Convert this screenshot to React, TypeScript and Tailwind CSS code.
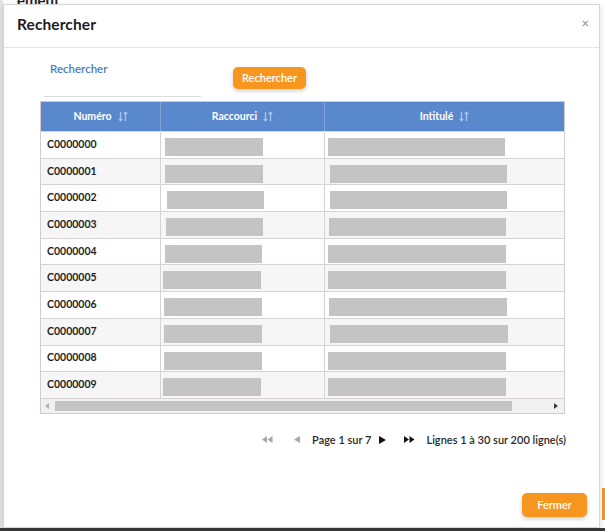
import React from "react";

const racc = [
  [5, 98], [5, 98], [7, 97], [6, 97], [5, 97], [3, 98], [4, 98], [4, 98], [4, 98], [3, 98],
];
const intit = [
  [4, 177], [6, 177], [6, 177], [5, 177], [4, 178], [4, 178], [5, 178], [6, 178], [4, 178], [4, 178],
];

function SortIcon() {
  return (
    <svg width="10" height="11" viewBox="0 0 10 11" className="ml-[6px] inline-block">
      <path d="M2.5 1 V9.5 M0.8 7.8 L2.5 9.8 L4.2 7.8" stroke="#a9c6ee" strokeWidth="1.3" fill="none" />
      <path d="M7.5 10 V1.5 M5.8 3.2 L7.5 1.2 L9.2 3.2" stroke="#a9c6ee" strokeWidth="1.3" fill="none" />
    </svg>
  );
}

export default function App() {
  const font = { fontFamily: "Lato, 'Open Sans', sans-serif" };
  return (
    <div className="relative w-[605px] h-[531px] overflow-hidden bg-white" style={font}>
      <div className="absolute left-[17px] top-[-11px] text-[15px] font-bold text-[#222]">ement</div>
      <div className="absolute left-0 top-0 w-[3px] h-full bg-[#e4e4e4]" />
      <div className="absolute right-0 top-[488px] w-[3px] h-[32px] bg-[#f7961e]" />
      <div className="absolute left-0 bottom-0 w-full h-[3px] bg-[#3a3a3a]" />
      <div className="absolute left-[3px] top-[4px] w-[597px] h-[524px] bg-white border border-[#d6d6d6] shadow-[0_2px_6px_rgba(0,0,0,0.15)] flex flex-col">
        <div className="h-[43px] border-b border-[#e3e3e3] flex items-center justify-between pl-[13px] pr-[10px] pb-[3px] shrink-0">
          <span className="text-[15.5px] font-bold text-[#1d1d1d] tracking-[0.1px]">Rechercher</span>
          <span className="text-[13px] text-[#8a8a8a] leading-none mb-[2px]">×</span>
        </div>
        <div className="pl-[37px] pt-[15px] flex">
          <div className="w-[157px] ml-[3px] border-b border-[#dcdcdc] h-[34px]">
            <div className="pl-[6px] text-[11.5px] font-semibold text-[#5079b5] leading-[12px]">Rechercher</div>
          </div>
          <div className="ml-[32px] mt-[4px] h-[22px] w-[73px] rounded-[5px] bg-[#f7961e] text-white text-[11px] font-semibold flex items-center justify-center shadow-[0_2px_4px_rgba(0,0,0,0.2)]">
            Rechercher
          </div>
        </div>
        <div className="ml-[36px] mt-[4px] w-[525px] border border-[#d2cccc]">
          <div className="flex h-[29px] bg-[#5a88cc] text-white text-[10.5px] font-bold">
            <div className="w-[120px] flex items-center justify-center border-r border-[#7fa1d6]">Numéro<SortIcon /></div>
            <div className="w-[164px] flex items-center justify-center border-r border-[#7fa1d6]">Raccourci<SortIcon /></div>
            <div className="flex-1 flex items-center justify-center">Intitulé<SortIcon /></div>
          </div>
          {racc.map((r, i) => (
            <div
              key={i}
              className={`flex h-[26.7px] border-t border-[#d8d2d2] ${i % 2 === 1 ? "bg-[#f6f6f6]" : "bg-white"}`}
            >
              <div className="w-[120px] border-r border-[#d8d2d2] flex items-center pl-[6px] text-[10.5px] font-bold text-[#1f1f1f]">
                C000000{i}
              </div>
              <div className="w-[164px] border-r border-[#d8d2d2] relative">
                <div className="absolute top-[6px] h-[18px] bg-[#c4c4c4]" style={{ left: r[0] - 1, width: r[1] }} />
              </div>
              <div className="flex-1 relative">
                <div className="absolute top-[6px] h-[18px] bg-[#c4c4c4]" style={{ left: intit[i][0] - 1, width: intit[i][1] }} />
              </div>
            </div>
          ))}
          <div className="h-[15px] border-t border-[#d8d2d2] bg-[#f1f1f1] flex items-center relative">
            <svg width="5" height="6" viewBox="0 0 5 6" className="absolute left-[4px] top-[4px]">
              <path d="M4 0 L0 3 L4 6 Z" fill="#b0b0b0" />
            </svg>
            <div className="absolute left-[14px] top-[2px] h-[10px] w-[457px] bg-[#c4c4c4]" />
            <svg width="5" height="6" viewBox="0 0 5 6" className="absolute right-[5px] top-[4px]">
              <path d="M0 0 L4 3 L0 6 Z" fill="#404040" />
            </svg>
          </div>
        </div>
        <div className="flex items-center justify-end mr-[33px] mt-[19px] text-[11px] font-semibold text-[#2a2a2a] h-[14px]">
          <svg width="11" height="7" viewBox="0 0 11 7" className="mr-[21px]">
            <path d="M5 0 L0 3.5 L5 7 Z M10.5 0 L5.5 3.5 L10.5 7 Z" fill="#a8a8a8" />
          </svg>
          <svg width="6" height="7" viewBox="0 0 6 7" className="mr-[12px]">
            <path d="M6 0 L0 3.5 L6 7 Z" fill="#a8a8a8" />
          </svg>
          <span>Page 1 sur 7</span>
          <svg width="7" height="8" viewBox="0 0 7 8" className="ml-[8px] mr-[18px]">
            <path d="M0 0 L7 4 L0 8 Z" fill="#111" />
          </svg>
          <svg width="11" height="7" viewBox="0 0 11 7" className="mr-[11px]">
            <path d="M0 0 L5 3.5 L0 7 Z M5.5 0 L10.5 3.5 L5.5 7 Z" fill="#111" />
          </svg>
          <span>Lignes 1 à 30 sur 200 ligne(s)</span>
        </div>
        <div className="flex-1" />
        <div className="flex justify-end pr-[12px] pb-[10px]">
          <div className="h-[24px] w-[65px] rounded-[5px] bg-[#f7961e] text-white text-[11px] font-semibold flex items-center justify-center shadow-[0_2px_4px_rgba(0,0,0,0.2)]">
            Fermer
          </div>
        </div>
      </div>
    </div>
  );
}
